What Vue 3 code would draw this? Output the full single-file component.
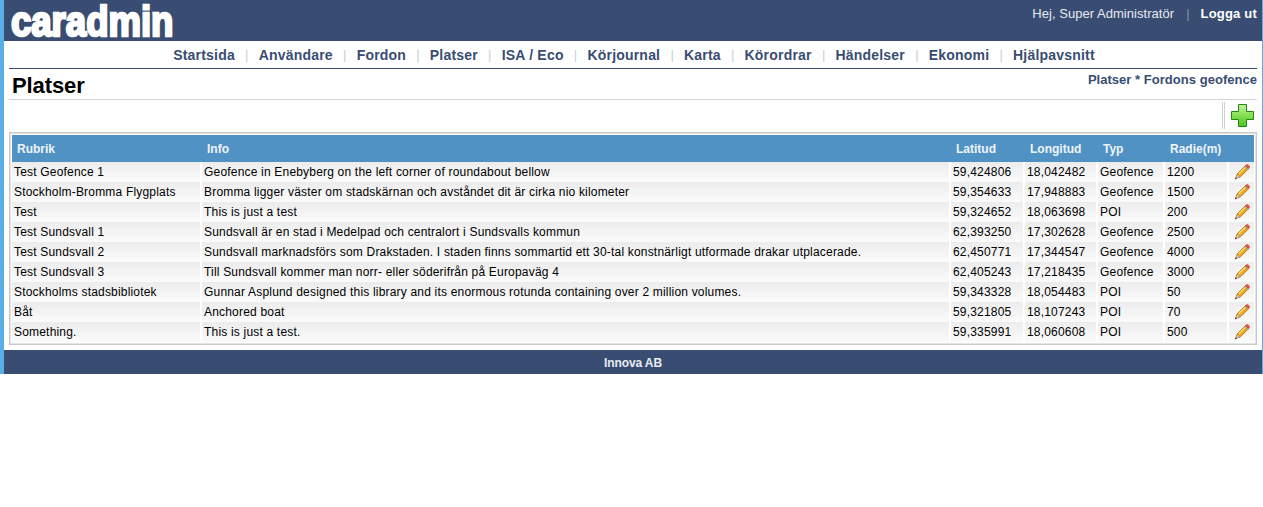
<script setup>
const nav = ['Startsida','Användare','Fordon','Platser','ISA / Eco','Körjournal','Karta','Körordrar','Händelser','Ekonomi','Hjälpavsnitt']
const rows = [
['Test Geofence 1','Geofence in Enebyberg on the left corner of roundabout bellow','59,424806','18,042482','Geofence','1200'],
['Stockholm-Bromma Flygplats','Bromma ligger väster om stadskärnan och avståndet dit är cirka nio kilometer','59,354633','17,948883','Geofence','1500'],
['Test','This is just a test','59,324652','18,063698','POI','200'],
['Test Sundsvall 1','Sundsvall är en stad i Medelpad och centralort i Sundsvalls kommun','62,393250','17,302628','Geofence','2500'],
['Test Sundsvall 2','Sundsvall marknadsförs som Drakstaden. I staden finns sommartid ett 30-tal konstnärligt utformade drakar utplacerade.','62,450771','17,344547','Geofence','4000'],
['Test Sundsvall 3','Till Sundsvall kommer man norr- eller söderifrån på Europaväg 4','62,405243','17,218435','Geofence','3000'],
['Stockholms stadsbibliotek','Gunnar Asplund designed this library and its enormous rotunda containing over 2 million volumes.','59,343328','18,054483','POI','50'],
['Båt','Anchored boat','59,321805','18,107243','POI','70'],
['Something.','This is just a test.','59,335991','18,060608','POI','500'],
]
const heads = ['Rubrik','Info','Latitud','Longitud','Typ','Radie(m)','']
</script>

<template>
  <div class="page">
    <header class="top">
      <div class="logo">caradmin</div>
      <div class="user">
        <span>Hej, Super Administratör</span>
        <i class="usep">|</i>
        <b>Logga ut</b>
      </div>
    </header>
    <nav class="nav">
      <template v-for="(n, i) in nav" :key="n">
        <i v-if="i" class="sep">|</i>
        <a>{{ n }}</a>
      </template>
    </nav>
    <div class="titlebar">
      <h1>Platser</h1>
      <div class="sub">Platser * Fordons geofence</div>
    </div>
    <div class="tools">
      <span class="vsep"></span>
      <svg class="plus" width="23" height="23" viewBox="0 0 23 23">
        <defs>
          <linearGradient id="pg" x1="0" y1="0" x2="0" y2="1">
            <stop offset="0" stop-color="#c4f29a" />
            <stop offset="0.55" stop-color="#7fdc4c" />
            <stop offset="1" stop-color="#4cc225" />
          </linearGradient>
        </defs>
        <path d="M7.5.5h8v7h7v8h-7v7h-8v-7h-7v-8h7z" fill="url(#pg)" stroke="#1c8a0e" />
      </svg>
    </div>
    <div class="frame">
      <table>
        <colgroup>
          <col class="c1" /><col class="c2" /><col class="c3" /><col class="c4" /><col class="c5" /><col class="c6" /><col class="c7" />
        </colgroup>
        <thead>
          <tr><th v-for="(h, i) in heads" :key="i">{{ h }}</th></tr>
        </thead>
        <tbody>
          <tr v-for="r in rows" :key="r[0]">
            <td v-for="(c, i) in r" :key="i">{{ c }}</td>
            <td class="edit">
              <svg width="16" height="16" viewBox="0 0 16 16">
                <path d="M3.4 9.6 11.6 1.6l3 3L6.4 12.8 2.2 14z" fill="#f5a81c" stroke="#a8690c" stroke-width=".9" />
                <path d="M4.6 9.8 11.8 2.9" stroke="#ffdf7a" stroke-width="1.3" />
                <path d="M11.2 1.9 12.4.8c.6-.5 1.2-.5 1.8 0l1.2 1.2c.5.6.5 1.2 0 1.8l-1 1z" fill="#e2583f" stroke="#b5402c" stroke-width=".4" />
                <path d="M11 2.4 14 5.3" stroke="#7fa7ad" stroke-width="1.1" />
                <path d="M3.3 9.9 6.1 12.7 2 14.6 1.2 15z" fill="#e8c99a" stroke="#8a6a48" stroke-width=".5" />
                <path d="M1.8 13.3 3 14.4 .8 15.4z" fill="#4a3a30" />
              </svg>
            </td>
          </tr>
        </tbody>
      </table>
    </div>
    <footer class="foot">Innova AB</footer>
  </div>
</template>

<style>
html, body { margin: 0; background: #fff; }
</style>

<style scoped>
.page {
  box-sizing: border-box;
  width: 1263px;
  height: 374px;
  border-left: 4px solid #5aaee6;
  border-right: 1px solid #5aaee6;
  font-family: "Liberation Sans", Arial, sans-serif;
  font-size: 12px;
  color: #000;
  display: flex;
  flex-direction: column;
}
.top {
  height: 41px;
  background: #394d73;
  display: flex;
  justify-content: space-between;
  align-items: flex-start;
  color: #fff;
  flex: none;
}
.logo {
  font-weight: 700;
  font-size: 44px;
  line-height: 41px;
  margin: 1px 0 0 7px;
  width: 210px;
  height: 41px;
  color: #fff;
  -webkit-text-stroke: 2.6px #fff;
  text-shadow: 1px 0 0 #c99a6a;
  transform: scale(0.83, 0.97);
  transform-origin: 0 0;
  white-space: nowrap;
}
.user {
  padding: 7px 5px 0 0;
  font-size: 13px;
  line-height: 14px;
  color: #e6eaf2;
  white-space: nowrap;
}
.user span { letter-spacing: 0.04px; }
.user b { color: #fff; letter-spacing: 0.2px; }
.usep { font-style: normal; color: #8492ab; margin: 0 11px 0 12px; }
.nav {
  margin: 0 5px;
  padding-left: 2px;
  border-bottom: 1px solid #394d73;
  display: flex;
  justify-content: center;
  align-items: center;
  font-size: 14px;
  font-weight: 700;
  color: #394d73;
  box-sizing: border-box;
  height: 28px;
  flex: none;
}
.nav a { letter-spacing: 0.2px; white-space: nowrap; }
.sep { font-style: normal; font-weight: 400; color: #c9ced6; margin: 0 10.2px; font-size: 13px; }
.titlebar {
  height: 31px;
  margin: 0 5px;
  border-bottom: 1px solid #d4d4d4;
  display: flex;
  justify-content: space-between;
  box-sizing: border-box;
  flex: none;
}
h1 {
  margin: 0;
  padding: 4px 0 0 3px;
  font-size: 22px;
  line-height: 25px;
  font-weight: 700;
  color: #000;
  letter-spacing: -0.1px;
}
.sub {
  font-size: 13px;
  font-weight: 700;
  color: #394d73;
  line-height: 15px;
  padding-top: 3px;
  letter-spacing: 0.03px;
}
.tools {
  height: 32px;
  margin: 0 5px;
  display: flex;
  justify-content: flex-end;
  align-items: flex-start;
  flex: none;
}
.vsep {
  width: 1px;
  height: 27px;
  margin: 2px 6px 0 0;
  border-left: 1px solid #d0d0d0;
  border-right: 1px solid #d0d0d0;
}
.plus {
  margin: 4px 3px 0 0;
  display: block;
}
.frame {
  margin: 0 5px;
  border: 1px solid #c8c8c8;
  box-shadow: inset 0 0 0 1px #e4e4e4;
  padding: 2px;
  height: 213px;
  box-sizing: border-box;
  flex: none;
}
table {
  border-collapse: separate;
  border-spacing: 0;
  table-layout: fixed;
  width: 1242px;
}
.c1 { width: 188px; }
.c2 { width: 749px; }
.c3 { width: 74px; }
.c4 { width: 73px; }
.c5 { width: 67px; }
.c6 { width: 64px; }
.c7 { width: 27px; }
th {
  background: #5192c5;
  color: #eef4f9;
  height: 27px;
  padding: 0 0 0 7px;
  text-align: left;
  font-size: 12px;
  font-weight: 700;
  white-space: nowrap;
}
th:first-child { padding-left: 5px; }
td {
  height: 20px;
  padding: 0 0 0 2px;
  background: linear-gradient(#ececec, #fbfbfb);
  background-origin: border-box;
  border-left: 2px solid #fff;
  white-space: nowrap;
  font-size: 12px;
  letter-spacing: 0.19px;
  line-height: 20px;
  overflow: hidden;
  box-sizing: border-box;
}
td:first-child { border-left: 0; }
.edit { padding: 0 0 0 5px; }
.edit svg { display: block; }
.foot {
  margin-top: 5px;
  height: 24px;
  background: #394d73;
  color: #e8ecf3;
  font-size: 12px;
  font-weight: 700;
  letter-spacing: -0.1px;
  text-align: center;
  line-height: 26px;
  flex: none;
}
</style>
